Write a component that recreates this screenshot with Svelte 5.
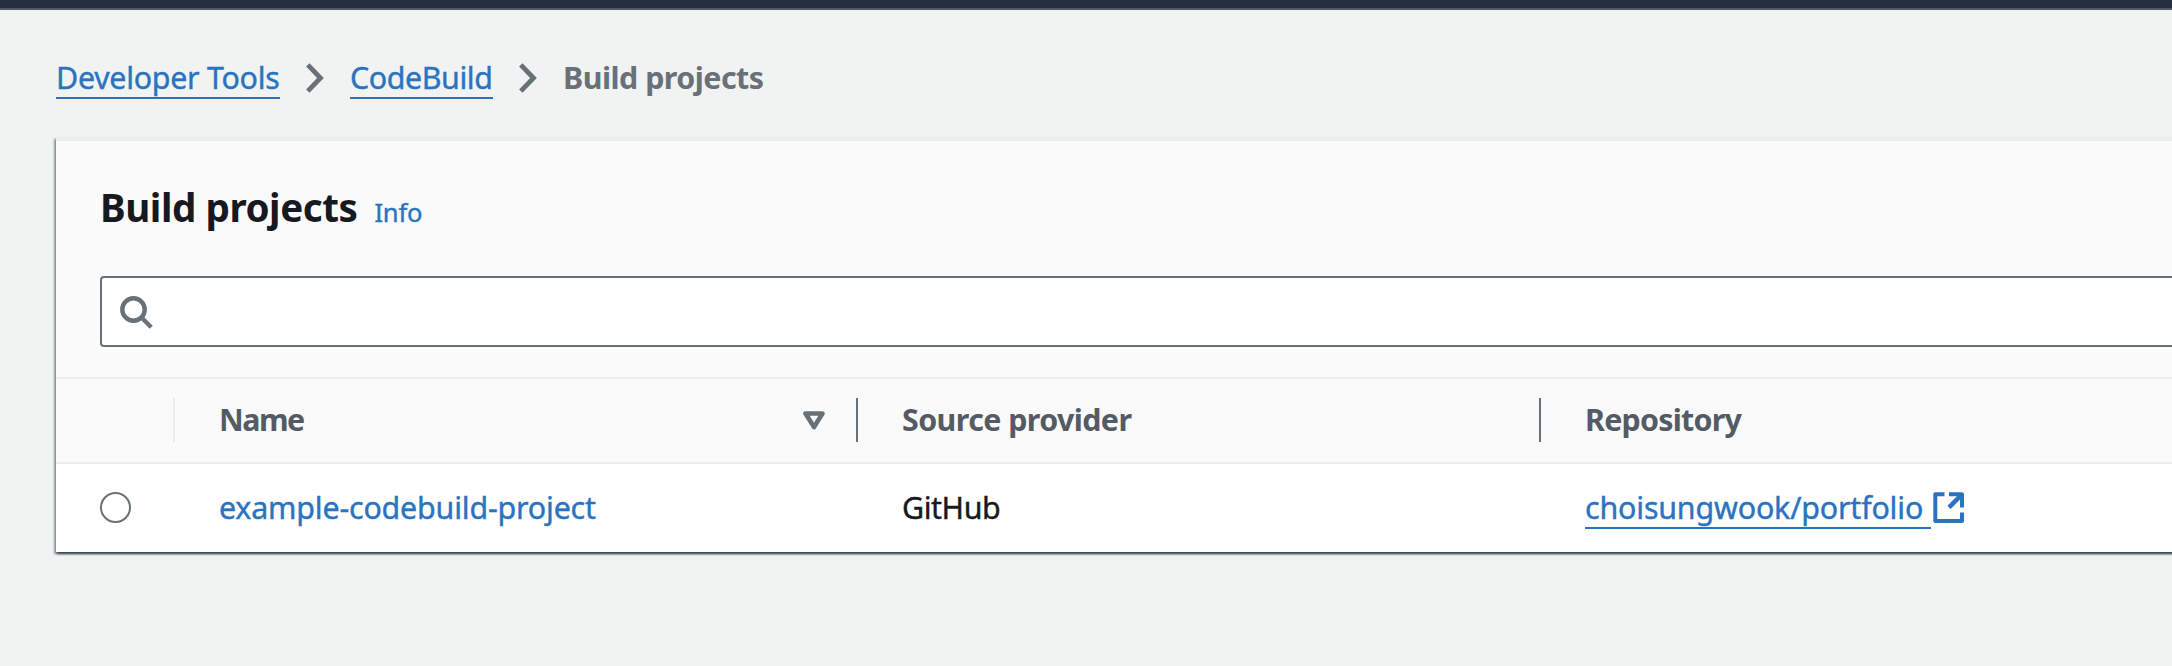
<script>
  const crumbs = [
    { label: 'Developer Tools', spacing: -0.28 },
    { label: 'CodeBuild', spacing: -0.43 }
  ];
</script>

<div class="page">
  <header class="topbar"></header>

  <nav class="breadcrumbs" aria-label="Breadcrumbs">
    {#each crumbs as crumb}
      <a class="link underlined" href="#top" style:letter-spacing="{crumb.spacing}px">{crumb.label}</a>
      <svg class="chevron" width="18" height="30" viewBox="0 0 18 30">
        <path d="M1.8 1.8 L14.5 15 L1.8 28.2" fill="none" stroke="#687078" stroke-width="4.8" />
      </svg>
    {/each}
    <span class="current">Build projects</span>
  </nav>

  <main class="card">
    <section class="card-header">
      <div class="title-row">
        <h1>Build projects</h1>
        <a class="link info" href="#info">Info</a>
      </div>
      <div class="search">
        <svg width="34" height="34" viewBox="0 0 34 34">
          <circle cx="13.5" cy="13.5" r="11.2" fill="none" stroke="#687078" stroke-width="4.4" />
          <path d="M21.5 21.5 L31.2 31.2" stroke="#687078" stroke-width="4.4" />
        </svg>
      </div>
    </section>

    <div class="row head">
      <div class="cell select"></div>
      <div class="cell">
        <span class="name">Name</span>
        <svg class="sort" width="22" height="19" viewBox="0 0 22 19">
          <path d="M2.5 2.5 H19.5 L11 16 Z" fill="none" stroke="#687078" stroke-width="4.6" stroke-linejoin="round" />
        </svg>
      </div>
      <div class="cell"><span class="source">Source provider</span></div>
      <div class="cell"><span class="repo">Repository</span></div>
    </div>

    <div class="row body">
      <div class="cell select"><span class="radio"></span></div>
      <div class="cell"><a class="link project" href="#project">example-codebuild-project</a></div>
      <div class="cell"><span class="provider">GitHub</span></div>
      <div class="cell">
        <a class="link underlined repository" href="#repository">choisungwook/portfolio</a>
        <svg class="external" width="32" height="32" viewBox="0 0 32 32" fill="none" stroke="#2a73bf" stroke-width="4">
          <path d="M11.5 2.3 H2.3 V29 H29 V20.5" stroke-linejoin="round" />
          <path d="M16 2.3 H29 V15.5" stroke-linejoin="round" />
          <path d="M28.5 2.8 L16 15.3" stroke-width="4.6" />
        </svg>
      </div>
    </div>
  </main>
</div>

<style>
  :global(body) {
    margin: 0;
    overflow: hidden;
    background: #f2f3f3;
  }

  .page {
    width: 2172px;
    height: 666px;
    overflow: hidden;
    background: #f1f3f3;
    color: #16191f;
    font: 400 30.4px/44px "Noto Sans", "Open Sans", sans-serif;
    white-space: nowrap;
  }

  .topbar {
    box-sizing: border-box;
    height: 10px;
    background: #262f3e;
    border-bottom: 2px solid #545b64;
  }

  .link {
    color: #2a73bf;
    text-decoration: none;
  }

  .link,
  .provider {
    -webkit-text-stroke: 0.4px currentColor;
  }

  .underlined {
    border-bottom: 2px solid #2a73bf;
  }

  .breadcrumbs {
    display: flex;
    align-items: flex-start;
    height: 127px;
    padding: 46px 56px 0;
    box-sizing: border-box;
  }

  .breadcrumbs .underlined {
    height: 41px;
  }

  .chevron {
    margin: 7px 26px 0 26.5px;
  }

  .current {
    color: #687078;
    font-weight: 700;
    letter-spacing: -0.52px;
  }

  .card {
    width: 2200px;
    margin-left: 56px;
    border-top: 4px solid #e9edee;
    box-sizing: border-box;
    height: 415px;
    background: #fff;
    box-shadow:
      0 2px 2px rgba(0, 28, 36, 0.5),
      -2px 2px 2px rgba(0, 28, 36, 0.35),
      2px 2px 2px rgba(0, 28, 36, 0.35);
  }

  .card-header {
    box-sizing: border-box;
    height: 238px;
    padding: 39px 0 0 44px;
    background: #fafafa;
    border-bottom: 2px solid #e9edee;
  }

  .title-row {
    display: flex;
    align-items: baseline;
    gap: 17px;
    height: 96px;
  }

  h1 {
    margin: 0;
    font-size: 38.6px;
    line-height: 54px;
    letter-spacing: -0.45px;
  }

  .info {
    font-size: 25.6px;
    letter-spacing: -0.2px;
  }

  .search {
    display: flex;
    align-items: center;
    box-sizing: border-box;
    height: 71px;
    padding: 2px 0 0 18px;
    border: 2px solid #687078;
    border-radius: 4px;
    background: #fff;
  }

  .row {
    display: grid;
    grid-template-columns: 119px 683px 683px 1fr;
    align-items: start;
  }

  .head {
    box-sizing: border-box;
    height: 85px;
    padding-top: 19px;
    background: #fafafa;
    border-bottom: 2px solid #e9edee;
    color: #545b64;
    font-weight: 700;
  }

  .body {
    padding-top: 21px;
  }

  .cell {
    display: flex;
    align-items: center;
    box-sizing: border-box;
    height: 44px;
    padding-left: 44px;
  }

  .head .cell:not(:last-child) {
    border-right: 2px solid #687078;
  }

  .head .cell.select {
    border-right-color: #e9edee;
  }

  .name {
    letter-spacing: -1.5px;
  }

  .source {
    letter-spacing: -0.58px;
  }

  .repo {
    letter-spacing: -0.76px;
  }

  .sort {
    margin-left: auto;
    margin-right: 31px;
  }

  .radio {
    box-sizing: border-box;
    width: 31px;
    height: 31px;
    border: 2px solid #687078;
    border-radius: 50%;
    background: #fff;
  }

  .project {
    padding-top: 2px;
    letter-spacing: -0.19px;
  }

  .provider {
    padding-top: 2px;
    letter-spacing: -0.45px;
  }

  .repository {
    height: 41px;
    padding-top: 1px;
    padding-right: 8px;
    letter-spacing: -0.18px;
  }

  .external {
    margin: 1px 0 0 2px;
  }
</style>
